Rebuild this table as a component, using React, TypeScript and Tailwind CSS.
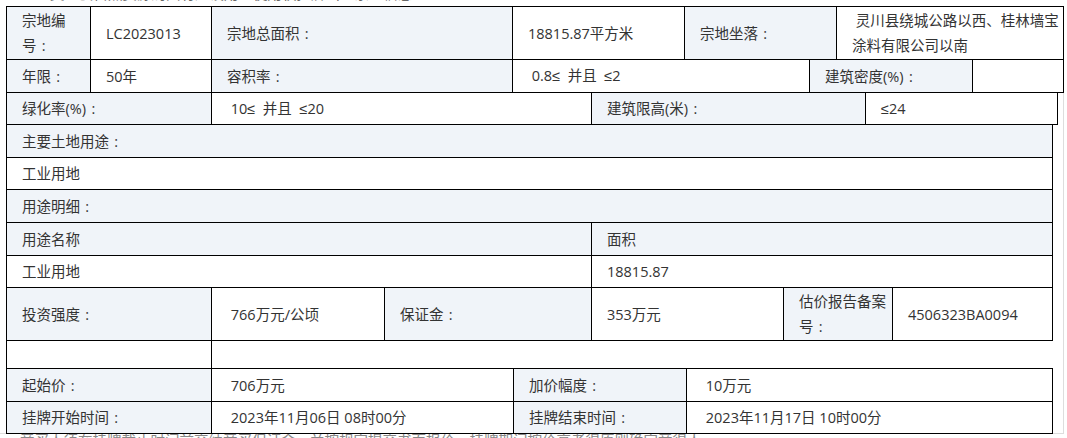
import type { ReactNode } from 'react'
import clsx from 'clsx'

interface CellProps {
  w: string
  label?: boolean
  last?: boolean
  children?: ReactNode
}

// full-width colon drawn centered in its 1em box, the way the page renders it
function Colon() {
  return <span className="inline-block w-[1em] text-center">:</span>
}

function Le() {
  return <span className="font-['Liberation_Sans',sans-serif]">≤</span>
}

// turns "：" and "≤" in a plain string into the spans above
function tx(s: string) {
  return s.split(/([：≤])/).map((part, i) => {
    if (part === '：') return <Colon key={i} />
    if (part === '≤') return <Le key={i} />
    return part
  })
}

function Cell({ w, label, last, children }: CellProps) {
  return (
    <div
      className={clsx(
        'flex shrink-0 items-center border-l border-black pl-[15px] leading-[25px] whitespace-pre',
        w,
        label ? 'bg-[#f0f4f9]' : 'bg-white',
        last && 'border-r'
      )}
    >
      <div>{typeof children === 'string' ? tx(children) : children}</div>
    </div>
  )
}

function Row({ h, first, children }: { h: string; first?: boolean; children: ReactNode }) {
  return <div className={clsx('ml-[6px] flex w-fit border-b border-black', h, first && 'border-t')}>{children}</div>
}

export default function App() {
  return (
    <div className="h-[438px] w-[1067px] overflow-hidden bg-white text-[14.5px] text-[#333] font-['Open_Sans','Noto_Sans_CJK_SC',sans-serif]">
      {/* cut-off line above the table */}
      <div className="h-[6px] overflow-hidden">
        <div className="-mt-[16px] pl-[50px] leading-[20px] whitespace-nowrap text-[#666]">
          灵川县自然资源局国有建设用地使用权挂牌出让宗地信息
        </div>
      </div>

      <div className="w-[1064px] border-r border-b border-[#ddd]">
        <Row h="h-[54px]" first>
          <Cell w="w-[84px]" label>
            宗地编
            <br />
            号<Colon />
          </Cell>
          <Cell w="w-[121px]">LC2023013</Cell>
          <Cell w="w-[301px]" label>宗地总面积：</Cell>
          <Cell w="w-[172px]">18815.87平方米</Cell>
          <Cell w="w-[152px]" label>宗地坐落：</Cell>
          <Cell w="w-[228px]" last>
            {' 灵川县绕城公路以西、桂林墙宝'}
            <br />
            涂料有限公司以南
          </Cell>
        </Row>
        <Row h="h-[33px]">
          <Cell w="w-[84px]" label>年限：</Cell>
          <Cell w="w-[121px]">50年</Cell>
          <Cell w="w-[301px]" label>容积率：</Cell>
          <Cell w="w-[297px]">{' 0.8≤  并且  ≤2'}</Cell>
          <Cell w="w-[163px]" label>建筑密度(%)：</Cell>
          <Cell w="w-[92px]" last></Cell>
        </Row>
        <Row h="h-[32px]">
          <Cell w="w-[205px]" label>绿化率(%)：</Cell>
          <Cell w="w-[380px]">{' 10≤  并且  ≤20'}</Cell>
          <Cell w="w-[274px]" label>建筑限高(米)：</Cell>
          <Cell w="w-[193px]" last>≤24</Cell>
        </Row>
        <Row h="h-[33px]">
          <Cell w="w-[1047px]" label last>主要土地用途：</Cell>
        </Row>
        <Row h="h-[32px]">
          <Cell w="w-[1047px]" last>工业用地</Cell>
        </Row>
        <Row h="h-[33px]">
          <Cell w="w-[1047px]" label last>用途明细：</Cell>
        </Row>
        <Row h="h-[33px]">
          <Cell w="w-[585px]" label>用途名称</Cell>
          <Cell w="w-[462px]" label last>面积</Cell>
        </Row>
        <Row h="h-[32px]">
          <Cell w="w-[585px]">工业用地</Cell>
          <Cell w="w-[462px]" last>18815.87</Cell>
        </Row>
        <Row h="h-[53px]">
          <Cell w="w-[205px]" label>投资强度：</Cell>
          <Cell w="w-[173px]">{' 766万元/公顷'}</Cell>
          <Cell w="w-[207px]" label>保证金：</Cell>
          <Cell w="w-[192px]">353万元</Cell>
          <Cell w="w-[109px]" label>
            估价报告备案
            <br />
            号<Colon />
          </Cell>
          <Cell w="w-[161px]" last>4506323BA0094</Cell>
        </Row>
        <div className="ml-[6px] flex h-[27px]">
          <Cell w="w-[205px]"></Cell>
          <Cell w="w-[120px]"></Cell>
        </div>

        <div className="relative -mb-px">
          <Row h="h-[34px]" first>
            <Cell w="w-[205px]" label>起始价：</Cell>
            <Cell w="w-[302px]">{' 706万元'}</Cell>
            <Cell w="w-[173px]" label>加价幅度：</Cell>
            <Cell w="w-[367px]" last>{' 10万元'}</Cell>
          </Row>
          <Row h="h-[32px]">
            <Cell w="w-[205px]" label>挂牌开始时间：</Cell>
            <Cell w="w-[302px]">{' 2023年11月06日 08时00分'}</Cell>
            <Cell w="w-[173px]" label>挂牌结束时间：</Cell>
            <Cell w="w-[367px]" last>{' 2023年11月17日 10时00分'}</Cell>
          </Row>
        </div>
      </div>

      {/* cut-off line below the table */}
      <div className="-mt-[3px] w-[980px] overflow-hidden pl-[20px] leading-[20px] whitespace-nowrap text-[#888]">
        竞买人须在挂牌截止时间前交纳竞买保证金，并按规定提交书面报价，挂牌期间按价高者得原则确定竞得人。
      </div>
    </div>
  )
}
